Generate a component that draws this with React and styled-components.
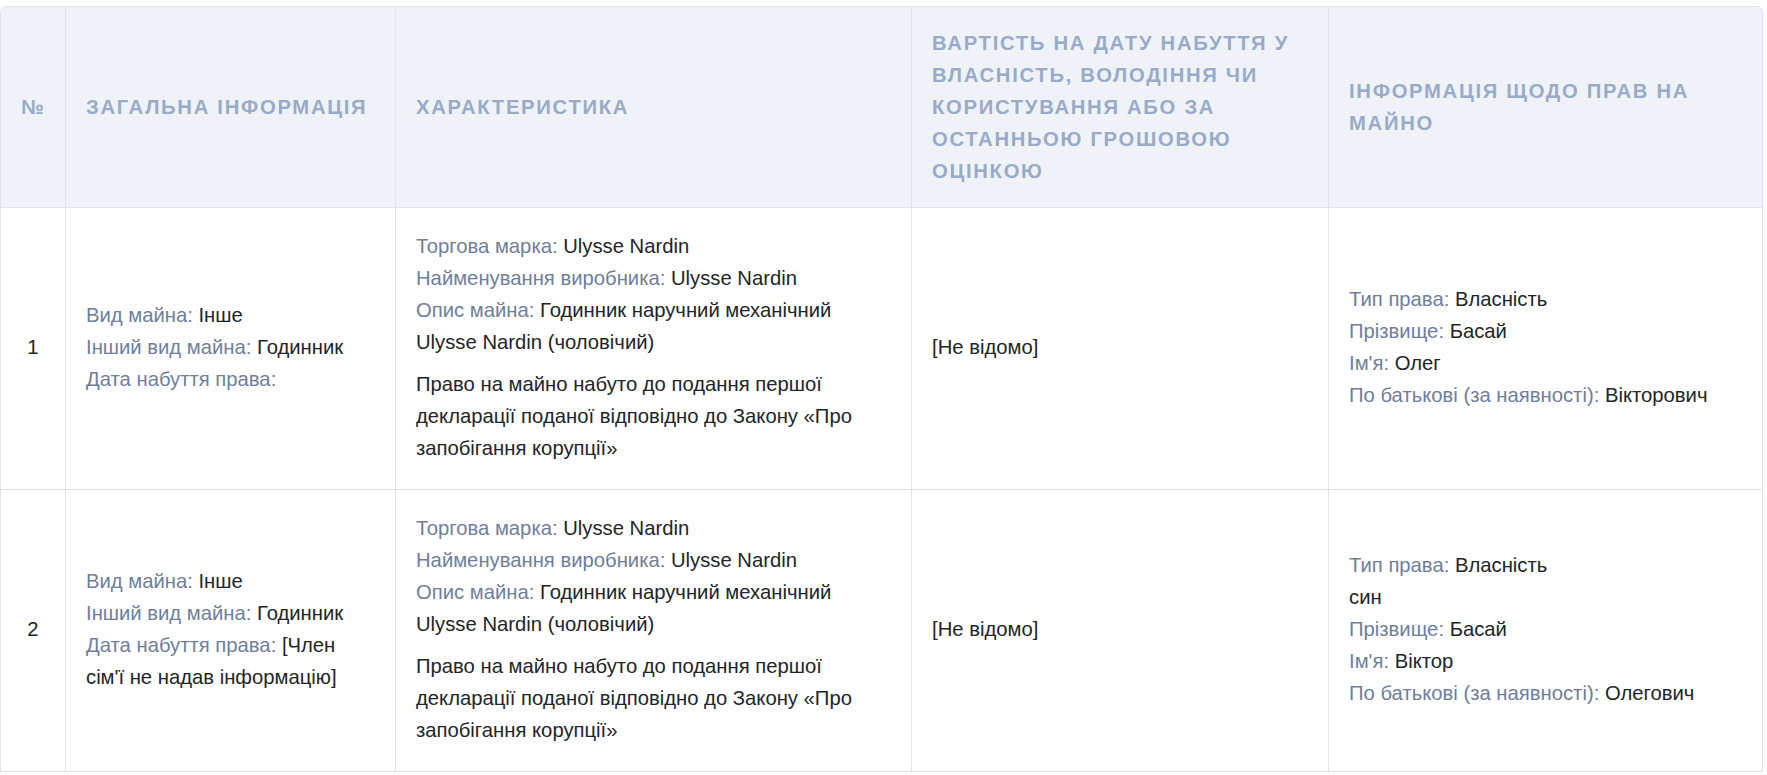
import React from "react"
import styled, { createGlobalStyle } from "styled-components"

const colors = {
  border: "#dee3ea",
  headBg: "#eff3f8",
  headText: "#99abc8",
  label: "#6f7e9b",
  text: "#212529",
}

const GlobalStyle = createGlobalStyle`
  body {
    margin: 0;
    background: #ffffff;
    font-family: "Liberation Sans", Arial, sans-serif;
    color: ${colors.text};
  }
`

const Wrapper = styled.div`
  margin-top: 6px;
  width: 1763px;
  box-sizing: border-box;
  border: 1px solid ${colors.border};
  border-bottom: none;
  border-radius: 6px 6px 0 0;
  overflow: hidden;
`

const Table = styled.table`
  width: 100%;
  table-layout: fixed;
  border-collapse: separate;
  border-spacing: 0;
`

const Col = styled.col`
  width: ${(p) => p.$w}px;
`

const Th = styled.th`
  background: ${colors.headBg};
  color: ${colors.headText};
  font-size: 20.25px;
  font-weight: 700;
  letter-spacing: 1.7px;
  line-height: 32px;
  text-transform: uppercase;
  text-align: ${(p) => (p.$center ? "center" : "left")};
  vertical-align: middle;
  padding: 20px;
  border-right: 1px solid ${colors.border};
  border-bottom: 1px solid ${colors.border};

  &:last-child {
    border-right: none;
  }
`

const Td = styled.td`
  font-size: 20.25px;
  line-height: 32px;
  text-align: ${(p) => (p.$center ? "center" : "left")};
  vertical-align: middle;
  padding: 22px 20px 25px;
  border-right: 1px solid ${colors.border};
  border-bottom: 1px solid ${colors.border};

  &:last-child {
    border-right: none;
  }
`

const Line = styled.div`
  margin: 0;
`

const Label = styled.span`
  color: ${colors.label};
`

const Note = styled.p`
  margin: 10px 0 0;
`

const Field = ({ label, children }) => (
  <Line>
    <Label>{label}:</Label> {children}
  </Line>
)

const rows = [
  {
    n: 1,
    date: "",
    rights: [
      ["Тип права", "Власність"],
      ["Прізвище", "Басай"],
      ["Ім'я", "Олег"],
      ["По батькові (за наявності)", "Вікторович"],
    ],
  },
  {
    n: 2,
    date: "[Член сім'ї не надав інформацію]",
    relation: "син",
    rights: [
      ["Тип права", "Власність"],
      ["Прізвище", "Басай"],
      ["Ім'я", "Віктор"],
      ["По батькові (за наявності)", "Олегович"],
    ],
  },
]

export default function App() {
  return (
    <>
      <GlobalStyle />
      <Wrapper>
        <Table>
          <colgroup>
            <Col $w={65} />
            <Col $w={330} />
            <Col $w={516} />
            <Col $w={417} />
            <Col $w={433} />
          </colgroup>
          <thead>
            <tr>
              <Th $center>№</Th>
              <Th>Загальна інформація</Th>
              <Th>Характеристика</Th>
              <Th>Вартість на дату набуття у власність, володіння чи користування або за останньою грошовою оцінкою</Th>
              <Th>Інформація щодо прав на майно</Th>
            </tr>
          </thead>
          <tbody>
            {rows.map((r) => (
              <tr key={r.n}>
                <Td $center>{r.n}</Td>
                <Td>
                  <Field label="Вид майна">Інше</Field>
                  <Field label="Інший вид майна">Годинник</Field>
                  <Field label="Дата набуття права">{r.date}</Field>
                </Td>
                <Td>
                  <Field label="Торгова марка">Ulysse Nardin</Field>
                  <Field label="Найменування виробника">Ulysse Nardin</Field>
                  <Field label="Опис майна">Годинник наручний механічний Ulysse Nardin (чоловічий)</Field>
                  <Note>
                    Право на майно набуто до подання першої декларації поданої відповідно до Закону «Про запобігання корупції»
                  </Note>
                </Td>
                <Td>[Не відомо]</Td>
                <Td>
                  <Field label={r.rights[0][0]}>{r.rights[0][1]}</Field>
                  {r.relation && <Line>{r.relation}</Line>}
                  {r.rights.slice(1).map(([l, v]) => (
                    <Field key={l} label={l}>{v}</Field>
                  ))}
                </Td>
              </tr>
            ))}
          </tbody>
        </Table>
      </Wrapper>
    </>
  )
}
